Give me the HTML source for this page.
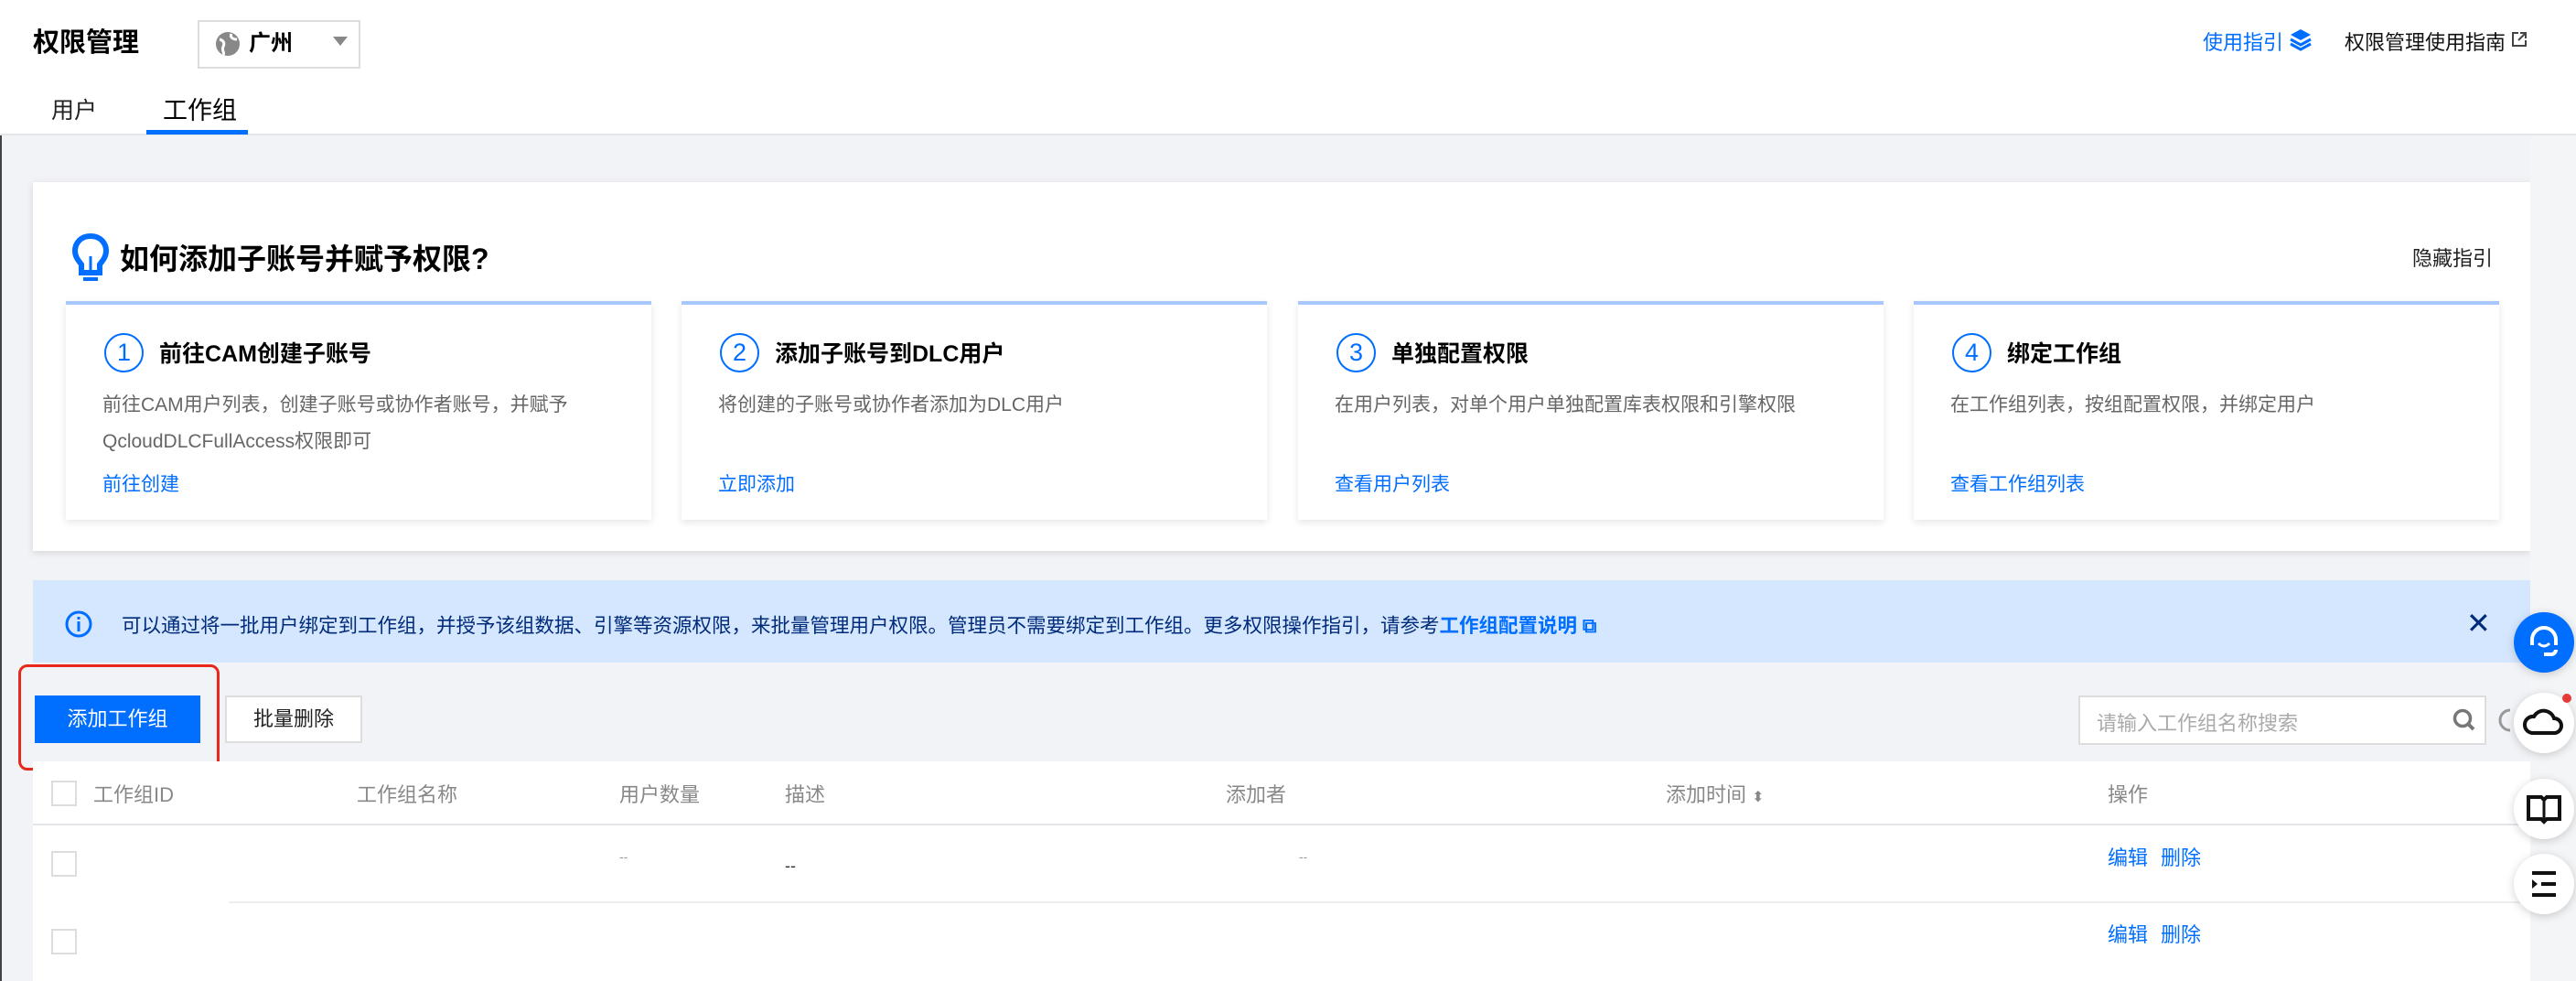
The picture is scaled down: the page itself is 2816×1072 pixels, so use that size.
<!DOCTYPE html>
<html><head><meta charset="utf-8"><style>
*{margin:0;padding:0;box-sizing:border-box}
body{width:2816px;height:1072px;overflow:hidden;background:#f2f3f7;font-family:"Liberation Sans","Noto Sans CJK SC",sans-serif;color:#000;position:relative}
.a{position:absolute;white-space:nowrap}
.hdr{position:absolute;left:0;top:0;width:2816px;height:148px;background:#fff;border-bottom:2px solid #e3e6eb}
.card{position:absolute;background:#fff;box-shadow:0 2px 8px rgba(0,0,0,.12)}
.step{position:absolute;top:329px;width:640px;height:239px;background:#fff;border-top:4px solid #a6c8ff;box-shadow:0 3px 8px rgba(0,0,0,.1)}
.num{position:absolute;left:42px;top:31px;width:43px;height:43px;border:2px solid #006eff;border-radius:50%;color:#006eff;font-size:27px;text-align:center;line-height:39px}
.st{position:absolute;left:102px;top:34px;font-size:25px;font-weight:bold;color:#000}
.sd{position:absolute;left:40px;top:90px;font-size:21px;color:#666;line-height:40px;white-space:normal;width:580px}
.sl{position:absolute;left:40px;top:180px;font-size:21px;color:#006eff}
.th{font-size:22px;color:#888;top:851px}
.cb{position:absolute;width:28px;height:28px;border:2px solid #ddd;background:#fff;left:56px}
.lk{color:#006eff;font-size:22px}
.fb{position:absolute;left:2748px;width:66px;height:66px;border-radius:50%;background:#fff;box-shadow:0 2px 10px rgba(0,0,0,.18)}
</style></head><body>
<div style="position:absolute;left:0;top:0;width:2px;height:1072px;background:#444"></div>
<div class="hdr"></div>
<div class="a" style="left:36px;top:23px;font-size:29px;font-weight:bold">权限管理</div>
<div class="a" style="left:216px;top:22px;width:178px;height:53px;border:2px solid #ddd;background:#fff"></div>
<svg class="a" style="left:234px;top:33px" width="30" height="30" viewBox="0 0 30 30"><circle cx="15" cy="15" r="13" fill="#888"/><path d="M6 10c4 1 6 4 4 8s2 7 0 9M19 4c-2 4 2 6 6 6" stroke="#fff" stroke-width="3" fill="none"/></svg>
<div class="a" style="left:272px;top:27px;font-size:24px;font-weight:bold">广州</div>
<div class="a" style="left:364px;top:40px;width:0;height:0;border-left:8px solid transparent;border-right:8px solid transparent;border-top:10px solid #888"></div>
<div class="a" style="left:56px;top:101px;font-size:25px;color:#222">用户</div>
<div class="a" style="left:178px;top:99px;font-size:27px;color:#000">工作组</div>
<div class="a" style="left:160px;top:142px;width:111px;height:5px;background:#006eff"></div>
<div class="a" style="left:2408px;top:29px;font-size:22px;color:#006eff">使用指引</div>
<svg class="a" style="left:2502px;top:30px" width="26" height="26" viewBox="0 0 26 26"><path d="M13 2L24 8L13 14L2 8Z" fill="#006eff"/><path d="M2 13l11 6 11-6M2 18l11 6 11-6" stroke="#006eff" stroke-width="3" fill="none"/></svg>
<div class="a" style="left:2563px;top:29px;font-size:22px;color:#111">权限管理使用指南</div>
<svg class="a" style="left:2745px;top:34px" width="18" height="18" viewBox="0 0 18 18"><path d="M8 2H2v14h14v-6M10 2h6v6M16 2L8 10" stroke="#444" stroke-width="2" fill="none"/></svg>

<div class="card" style="left:36px;top:199px;width:2730px;height:403px"></div>
<svg class="a" style="left:78px;top:254px" width="42" height="56" viewBox="0 0 42 56"><path d="M21 4C10 4 4 12 4 20c0 7 4 11 7 15v9h20v-9c3-4 7-8 7-15C38 12 32 4 21 4z" fill="none" stroke="#006eff" stroke-width="6"/><path d="M21 26v18" stroke="#006eff" stroke-width="3"/><rect x="13" y="49" width="16" height="4" fill="#006eff"/></svg>
<div class="a" style="left:131px;top:258px;font-size:32px;font-weight:bold">如何添加子账号并赋予权限?</div>
<div class="a" style="left:2637px;top:265px;font-size:22px;color:#222">隐藏指引</div>
<div class="step" style="left:72px"><div class="num">1</div><div class="st">前往CAM创建子账号</div><div class="sd">前往CAM用户列表，创建子账号或协作者账号，并赋予QcloudDLCFullAccess权限即可</div><div class="sl">前往创建</div></div>
<div class="step" style="left:745px"><div class="num">2</div><div class="st">添加子账号到DLC用户</div><div class="sd">将创建的子账号或协作者添加为DLC用户</div><div class="sl">立即添加</div></div>
<div class="step" style="left:1419px"><div class="num">3</div><div class="st">单独配置权限</div><div class="sd">在用户列表，对单个用户单独配置库表权限和引擎权限</div><div class="sl">查看用户列表</div></div>
<div class="step" style="left:2092px"><div class="num">4</div><div class="st">绑定工作组</div><div class="sd">在工作组列表，按组配置权限，并绑定用户</div><div class="sl">查看工作组列表</div></div>

<div class="a" style="left:36px;top:634px;width:2730px;height:90px;background:#d5e7ff"></div>
<svg class="a" style="left:70px;top:666px" width="32" height="32" viewBox="0 0 32 32"><circle cx="16" cy="16" r="13" fill="none" stroke="#006eff" stroke-width="3"/><rect x="14.5" y="13" width="3" height="11" fill="#006eff"/><rect x="14.5" y="8" width="3" height="3" fill="#006eff"/></svg>
<div class="a" style="left:133px;top:667px;font-size:21.5px;color:#002a7a">可以通过将一批用户绑定到工作组，并授予该组数据、引擎等资源权限，来批量管理用户权限。管理员不需要绑定到工作组。更多权限操作指引，请参考<b style="color:#006eff">工作组配置说明</b> <span style="color:#006eff;font-weight:bold">⧉</span></div>
<div class="a" style="left:2696px;top:662px;font-size:32px;color:#002a7a">✕</div>

<div class="a" style="left:20px;top:726px;width:220px;height:116px;border:3px solid #e8281b;border-radius:10px"></div>
<div class="a" style="left:38px;top:760px;width:181px;height:52px;background:#006eff;color:#fff;font-size:22px;text-align:center;line-height:52px">添加工作组</div>
<div class="a" style="left:246px;top:760px;width:150px;height:52px;background:#fff;border:2px solid #ddd;color:#222;font-size:22px;text-align:center;line-height:48px">批量删除</div>
<div class="a" style="left:2272px;top:760px;width:446px;height:54px;background:#fff;border:2px solid #ddd"></div>
<div class="a" style="left:2292px;top:773px;font-size:22px;color:#aaa">请输入工作组名称搜索</div>
<svg class="a" style="left:2680px;top:773px" width="28" height="28" viewBox="0 0 28 28"><circle cx="12" cy="12" r="8.5" fill="none" stroke="#777" stroke-width="3.5"/><path d="M18 18l6 6" stroke="#777" stroke-width="4"/></svg>
<svg class="a" style="left:2730px;top:772px" width="18" height="30" viewBox="0 0 18 30"><path d="M14 4a11 11 0 000 22" stroke="#999" stroke-width="3" fill="none"/></svg>

<div class="a" style="left:36px;top:832px;width:2730px;height:240px;background:#fff"></div>
<div class="a" style="left:36px;top:900px;width:2730px;height:2px;background:#e3e6eb"></div>
<div class="a" style="left:250px;top:985px;width:2516px;height:2px;background:#eee"></div>
<div class="cb" style="top:853px"></div><div class="cb" style="top:930px"></div><div class="cb" style="top:1015px"></div>
<div class="a th" style="left:102px">工作组ID</div>
<div class="a th" style="left:390px">工作组名称</div>
<div class="a th" style="left:677px">用户数量</div>
<div class="a th" style="left:858px">描述</div>
<div class="a th" style="left:1340px">添加者</div>
<div class="a th" style="left:1821px">添加时间 <span style="font-size:16px">⬍</span></div>
<div class="a th" style="left:2304px">操作</div>
<div class="a" style="left:677px;top:928px;font-size:14px;color:#999">--</div>
<div class="a" style="left:858px;top:936px;font-size:18px;color:#333">--</div>
<div class="a" style="left:1420px;top:928px;font-size:14px;color:#999">--</div>
<div class="a lk" style="left:2304px;top:920px">编辑</div><div class="a lk" style="left:2362px;top:920px">删除</div>
<div class="a lk" style="left:2304px;top:1004px">编辑</div><div class="a lk" style="left:2362px;top:1004px">删除</div>

<div class="a" style="left:2766px;top:148px;width:50px;height:924px;background:#f4f5f7"></div>
<div class="fb" style="top:669px;background:#006eff"><svg width="66" height="66" viewBox="0 0 66 66"><path d="M20 36v-6a13 13 0 0126 0v6M33 46h8a5 5 0 005-5" stroke="#fff" stroke-width="4" fill="none"/><path d="M27 34q6 6 12 0" stroke="#fff" stroke-width="3" fill="none"/></svg></div>
<div class="fb" style="top:757px"><svg width="66" height="66" viewBox="0 0 66 66"><path d="M20 44h24a8 8 0 000-16 12 12 0 00-22-2 9 9 0 00-2 18z" stroke="#111" stroke-width="4" fill="none"/><circle cx="58" cy="6" r="5" fill="#e63a3a"/></svg></div>
<div class="fb" style="top:851px"><svg width="66" height="66" viewBox="0 0 66 66"><path d="M16 20h14l3 3 3-3h14v24H36l-3 3-3-3H16z" stroke="#111" stroke-width="4" fill="none"/><path d="M33 23v21" stroke="#111" stroke-width="3"/></svg></div>
<div class="fb" style="top:933px"><svg width="66" height="66" viewBox="0 0 66 66"><path d="M20 21h26M30 33h16M20 45h26" stroke="#111" stroke-width="4"/><path d="M20 28l6 5-6 5z" fill="#111"/></svg></div>
</body></html>
